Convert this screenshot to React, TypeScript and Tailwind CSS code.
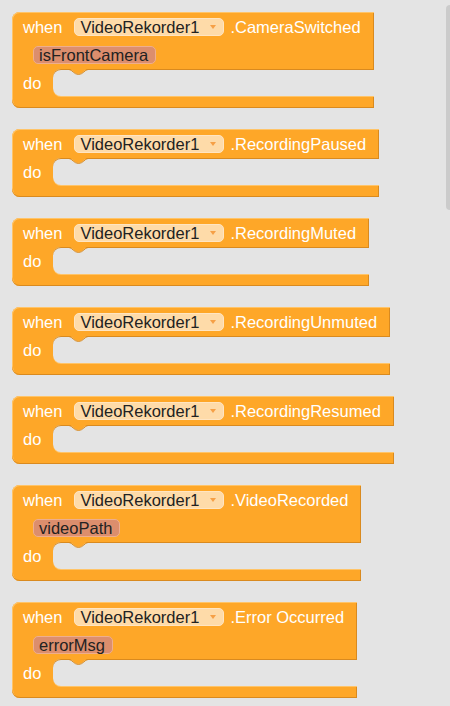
import React from 'react';

type EventBlock = {
  name: string;
  param?: string;
};

const events: EventBlock[] = [
  { name: '.CameraSwitched', param: 'isFrontCamera' },
  { name: '.RecordingPaused' },
  { name: '.RecordingMuted' },
  { name: '.RecordingUnmuted' },
  { name: '.RecordingResumed' },
  { name: '.VideoRecorded', param: 'videoPath' },
  { name: '.Error Occurred', param: 'errorMsg' },
];

const Block: React.FC<{ block: EventBlock }> = ({ block }) => {
  return (
    <div className="flex w-fit flex-col text-[16.5px] leading-[18px]">
      {/* header */}
      <div className="flex items-center rounded-tl-[8px] bg-[#fea728] pb-[5px] pl-[11px] pr-[13px] pt-[6px] shadow-[inset_0_1px_0_#ffc468,inset_1px_0_0_#ffc468,inset_-1px_0_0_#d98a1f]">
        <span className="text-white">when</span>
        <div className="ml-[12px] flex h-[18px] items-center rounded-[5px] border border-[#ffe5c2] bg-[#fedba9] pl-[5px] pr-[7px] text-[#222]">
          <span>VideoRekorder1</span>
          <svg className="ml-[11px]" width="6" height="4" viewBox="0 0 6 4">
            <path d="M0 0 L6 0 L3 4 Z" fill="#f6a046" />
          </svg>
        </div>
        <span className="ml-[6px] text-white">{block.name}</span>
      </div>

      {block.param && (
        <div className="flex bg-[#fea728] pb-[5px] pl-[21px] pt-[5px] shadow-[inset_1px_0_0_#ffc468,inset_-1px_0_0_#d98a1f]">
          <div className="flex h-[18px] items-center rounded-[5px] border border-[#eeae8e] bg-[#dc8e6d] pl-[5px] pr-[7px] text-[#222]">
            {block.param}
          </div>
        </div>
      )}

      {/* do row */}
      <div className="flex bg-[#fea728] shadow-[inset_1px_0_0_#ffc468]">
        <div className="flex h-[27px] w-[41px] items-center pl-[11px] text-white">do</div>
        <div className="relative flex-1 rounded-l-[8px] bg-[#e4e4e4] shadow-[inset_0_1px_0_#d98a1f,0_1px_0_#ffc468]">
          <svg className="absolute left-[16px] top-0" width="19" height="6" viewBox="0 0 19 6">
            <path d="M0 0 C3 0 5 5 9.5 5 C14 5 16 0 19 0 Z" fill="#fea728" />
            <path d="M0 0.5 C3 0.5 5 5.5 9.5 5.5 C14 5.5 16 0.5 19 0.5" fill="none" stroke="#d98a1f" strokeWidth="1" />
          </svg>
        </div>
      </div>

      {/* bottom bar */}
      <div className="h-[12px] rounded-bl-[8px] bg-[#fea728] shadow-[inset_0_-1px_0_#d98a1f,inset_-1px_0_0_#d98a1f,inset_1px_0_0_#ffc468]" />
    </div>
  );
};

const App: React.FC = () => {
  return (
    <div className="relative h-[706px] w-[450px] overflow-hidden bg-[#e4e4e4] font-['Liberation_Sans',Arial,sans-serif]">
      <div className="flex flex-col gap-[21px] pl-[12px] pt-[12px]">
        {events.map((ev) => (
          <Block key={ev.name} block={ev} />
        ))}
      </div>
      {/* scrollbar */}
      <div className="absolute right-[-4px] top-[5px] h-[205px] w-[8px] rounded-[4px] bg-[#cbcbcb]" />
    </div>
  );
};

export default App;
